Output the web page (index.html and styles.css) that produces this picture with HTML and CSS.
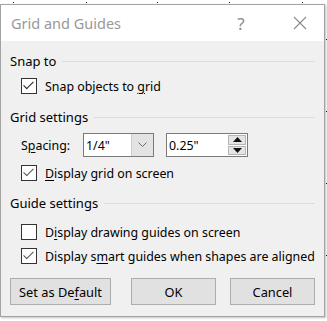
FILE: index.html
```html
<!DOCTYPE html>
<html lang="en">
<head>
    <meta charset="UTF-8">
    <title>Grid and Guides</title>
    <link rel="stylesheet" href="styles.css">
</head>
<body>
    <!-- Canvas grid dots behind the dialog -->
    <div class="canvas">
        <span class="dot" style="left:13px;top:2px"></span>
        <span class="dot" style="left:86px;top:2px"></span>
        <span class="dot" style="left:157px;top:2px"></span>
        <span class="dot" style="left:229px;top:2px"></span>
        <span class="dot" style="left:302px;top:2px"></span>
        <span class="dot" style="left:326px;top:39px"></span>
        <span class="dot" style="left:326px;top:111px"></span>
        <span class="dot" style="left:326px;top:183px"></span>
        <span class="dot" style="left:326px;top:255px"></span>
    </div>

    <div class="dialog">
        <div class="titlebar">
            <span class="title">Grid and Guides</span>
            <span class="title-btn help">?</span>
            <span class="title-btn close">
                <svg width="14" height="14" viewBox="0 0 14 14">
                    <path d="M1 1 L13 13 M13 1 L1 13" stroke="#8a8a8a" stroke-width="1.1" fill="none"/>
                </svg>
            </span>
        </div>

        <div class="content">
            <div class="section-head head-snap">
                <span>Snap to</span>
                <div class="rule"></div>
            </div>
            <label class="check-row row-snap">
                <span class="box checked"></span>
                <span>Snap objects to <u>g</u>rid</span>
            </label>

            <div class="section-head head-grid">
                <span>Grid settings</span>
                <div class="rule"></div>
            </div>
            <div class="spacing-row">
                <span class="spacing-label">S<u>p</u>acing:</span>
                <div class="combo">
                    <span class="combo-value">1/4"</span>
                    <span class="combo-arrow">
                        <svg width="9" height="6" viewBox="0 0 9 6">
                            <path d="M0.5 0.5 L4.5 4.5 L8.5 0.5" stroke="#6a6a6a" stroke-width="1" fill="none"/>
                        </svg>
                    </span>
                </div>
                <div class="spin">
                    <span class="spin-value">0.25"</span>
                    <div class="spin-btns">
                        <span class="spin-btn"><svg width="9" height="5" viewBox="0 0 9 5"><path d="M0 5 L4.5 0 L9 5 Z" fill="#111"/></svg></span>
                        <span class="spin-btn"><svg width="9" height="5" viewBox="0 0 9 5"><path d="M0 0 L9 0 L4.5 5 Z" fill="#111"/></svg></span>
                    </div>
                </div>
            </div>
            <label class="check-row row-grid">
                <span class="box checked light"></span>
                <span><u>D</u>isplay grid on screen</span>
            </label>

            <div class="section-head head-guide">
                <span>Guide settings</span>
                <div class="rule"></div>
            </div>
            <label class="check-row row-draw">
                <span class="box"></span>
                <span>D<u>i</u>splay drawing guides on screen</span>
            </label>
            <label class="check-row row-smart">
                <span class="box checked light"></span>
                <span>Display s<u>m</u>art guides when shapes are aligned</span>
            </label>

            <div class="buttons">
                <button class="btn btn-default">Set as De<u>f</u>ault</button>
                <button class="btn btn-ok">OK</button>
                <button class="btn btn-cancel">Cancel</button>
            </div>
        </div>
    </div>
</body>
</html>
```

FILE: styles.css
```css
/* General styles */
body {
    margin: 0;
    background-color: #ffffff;
    font-family: "Noto Sans", "Open Sans", sans-serif;
    font-size: 12.4px;
    color: #000000;
    width: 327px;
    height: 321px;
    overflow: hidden;
    position: relative;
    white-space: nowrap;
}

u {
    text-decoration-thickness: 1px;
    text-underline-offset: 2px;
}

/* Canvas dots */
.canvas {
    position: absolute;
    inset: 0;
}

.dot {
    position: absolute;
    width: 1px;
    height: 1px;
    background-color: #222;
}

/* Dialog frame */
.dialog {
    position: relative;
    margin-top: 4px;
    width: 323px;
    height: 311px;
    border: 1px solid #a3a3a3;
    background-color: #f0f0f0;
    box-shadow: 1px 1px 2px rgba(0, 0, 0, 0.25);
    display: flex;
    flex-direction: column;
}

.titlebar {
    height: 36px;
    background-color: #ffffff;
    display: flex;
    align-items: center;
}

.title {
    margin-left: 10px;
    font-size: 14.5px;
    color: #999999;
    flex-grow: 1;
}

.title-btn {
    color: #8a8a8a;
    display: flex;
    align-items: center;
    justify-content: center;
}

.help {
    font-size: 17px;
    width: 20px;
    margin-right: 42px;
}

.close {
    width: 14px;
    margin-right: 17px;
}

.content {
    display: flex;
    flex-direction: column;
    padding: 10px 9px 0 9px;
}

/* Section headings with a rule */
.section-head {
    height: 20px;
    display: flex;
    align-items: center;
    font-size: 13px;
}

.section-head .rule {
    flex-grow: 1;
    height: 1px;
    background-color: #dcdcdc;
    margin-left: 6px;
}

.head-grid {
    margin-top: 13px;
}

.head-guide {
    margin-top: 12px;
}

/* Checkboxes */
.check-row {
    display: flex;
    align-items: center;
    height: 16px;
    margin-left: 11px;
}

.row-snap {
    margin-top: 7px;
}

.row-grid {
    margin-top: 8px;
}

.row-draw {
    margin-top: 11px;
}

.row-smart {
    margin-top: 8px;
}

.box {
    width: 14px;
    height: 14px;
    border: 1px solid #333333;
    background-color: #ffffff;
    margin-right: 8px;
    position: relative;
    flex-shrink: 0;
}

.box.checked::after {
    content: "";
    position: absolute;
    left: 4px;
    top: 0px;
    width: 4px;
    height: 9px;
    border-right: 1.3px solid #222;
    border-bottom: 1.3px solid #222;
    transform: rotate(45deg);
    transform-origin: center;
}

.box.light.checked::after {
    border-color: #555;
}

/* Spacing row */
.spacing-row {
    display: flex;
    align-items: center;
    height: 24px;
    margin-top: 6px;
    margin-left: 11px;
}

.spacing-label {
    width: 62px;
}

.combo {
    width: 69px;
    height: 22px;
    border: 1px solid #7a7a7a;
    background-color: #ffffff;
    display: flex;
    align-items: center;
}

.combo-value {
    flex-grow: 1;
    padding-left: 2px;
}

.combo-arrow {
    width: 21px;
    height: 22px;
    background-color: #e3e3e3;
    border-left: 1px solid #cfcfcf;
    display: flex;
    align-items: center;
    justify-content: center;
}

.spin {
    margin-left: 12px;
    width: 80px;
    height: 22px;
    border: 1px solid #7a7a7a;
    background-color: #ffffff;
    display: flex;
    align-items: center;
}

.spin-value {
    flex-grow: 1;
    padding-left: 2px;
}

.spin-btns {
    width: 18px;
    height: 20px;
    margin-right: 1px;
    display: flex;
    flex-direction: column;
    gap: 1px;
}

.spin-btn {
    flex: 1;
    background-color: #e5e5e5;
    border: 1px solid #b5b5b5;
    display: flex;
    align-items: center;
    justify-content: center;
}

/* Dialog buttons */
.buttons {
    display: flex;
    margin-top: 14px;
    margin-left: 0;
}

.btn {
    height: 27px;
    font-family: inherit;
    font-size: 12.8px;
    background-color: #e1e1e1;
    border: 1px solid #adadad;
    color: #000;
    padding: 0;
}

.btn-default {
    width: 101px;
}

.btn-ok {
    width: 85px;
    margin-left: 20px;
}

.btn-cancel {
    width: 85px;
    margin-left: 14px;
}
```
